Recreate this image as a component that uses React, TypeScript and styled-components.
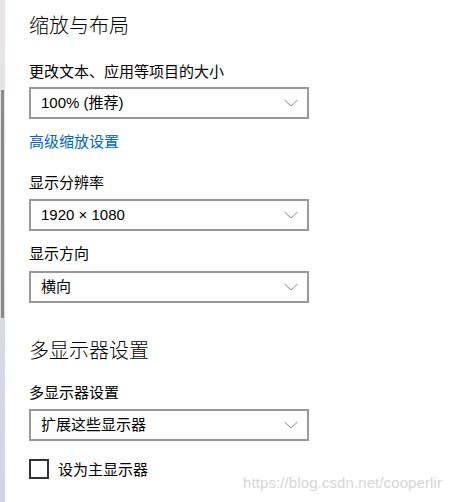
import React from 'react';
import styled, {createGlobalStyle} from 'styled-components';

const GlobalStyle = createGlobalStyle`
  html, body {
    margin: 0;
    padding: 0;
    background: #ffffff;
  }
  body {
    font-family: "Noto Sans CJK SC", "Liberation Sans", sans-serif;
    color: #000000;
  }
`;

const Window = styled.div`
  position: relative;
  display: flex;
  width: 460px;
  height: 502px;
  overflow: hidden;
  background: #ffffff;
`;

const SideStrip = styled.div`
  position: relative;
  flex: 0 0 5px;
  height: 100%;
  background: linear-gradient(180deg, #ebe4ea 0%, #dfdde6 50%, #cbd6e1 100%);
`;

// thin scrollbar thumb laid over the strip
const ScrollThumb = styled.div`
  position: absolute;
  left: 1px;
  top: 90px;
  width: 3px;
  height: 228px;
  background: #8a8a8a;
`;

const Content = styled.div`
  flex: 1;
  display: flex;
  flex-direction: column;
  align-items: flex-start;
  padding: 11px 0 0 24px;
`;

const SectionTitle = styled.h2<{$top?: number}>`
  margin: ${p => p.$top ?? 0}px 0 0;
  font-size: 20px;
  font-weight: 300;
  line-height: 28px;
  height: 28px;
  color: #000;
`;

const Label = styled.div<{$top: number}>`
  margin-top: ${p => p.$top}px;
  font-size: 15px;
  line-height: 20px;
  height: 20px;
  color: #000;
`;

const Link = styled.a`
  margin-top: 12px;
  font-size: 15px;
  line-height: 20px;
  height: 20px;
  color: #0067c0;
  text-decoration: none;
`;

const Select = styled.div<{$top: number}>`
  margin-top: ${p => p.$top}px;
  box-sizing: border-box;
  width: 280px;
  height: 32px;
  border: 2px solid #999999;
  display: flex;
  align-items: center;
  justify-content: space-between;
  padding: 0 9px 0 10px;
  font-size: 15px;
  color: #000;
`;

const SelectText = styled.span`
  font-family: "Liberation Sans", "Noto Sans CJK SC", sans-serif;
  line-height: 20px;
`;

const CheckRow = styled.label`
  margin-top: 18px;
  display: flex;
  align-items: center;
  gap: 9px;
  font-size: 15px;
  line-height: 20px;
`;

const CheckBox = styled.span`
  box-sizing: border-box;
  width: 20px;
  height: 20px;
  border: 2px solid #333333;
  background: #fff;
`;

const Watermark = styled.div`
  position: absolute;
  left: 243px;
  top: 474px;
  font-family: "Liberation Sans", sans-serif;
  font-size: 15px;
  line-height: 18px;
  color: #d6d6d6;
  letter-spacing: 0.1px;
`;

function Chevron() {
  return (
    <svg width="14" height="8" viewBox="0 0 14 8">
      <polyline points="0.5,1 7,7 13.5,1" fill="none" stroke="#858585" strokeWidth="1" />
    </svg>
  );
}

function Dropdown({value, top}: {value: string; top: number}) {
  return (
    <Select $top={top}>
      <SelectText>{value}</SelectText>
      <Chevron />
    </Select>
  );
}

export default function App() {
  return (
    <Window>
      <GlobalStyle />
      <SideStrip>
        <ScrollThumb />
      </SideStrip>
      <Content>
        <SectionTitle>缩放与布局</SectionTitle>
        <Label $top={22}>更改文本、应用等项目的大小</Label>
        <Dropdown value="100% (推荐)" top={6} />
        <Link href="#">高级缩放设置</Link>
        <Label $top={21}>显示分辨率</Label>
        <Dropdown value="1920 × 1080" top={7} />
        <Label $top={12}>显示方向</Label>
        <Dropdown value="横向" top={8} />
        <SectionTitle $top={33}>多显示器设置</SectionTitle>
        <Label $top={18}>多显示器设置</Label>
        <Dropdown value="扩展这些显示器" top={7} />
        <CheckRow>
          <CheckBox />
          设为主显示器
        </CheckRow>
      </Content>
      <Watermark>https://blog.csdn.net/cooperlir</Watermark>
    </Window>
  );
}
